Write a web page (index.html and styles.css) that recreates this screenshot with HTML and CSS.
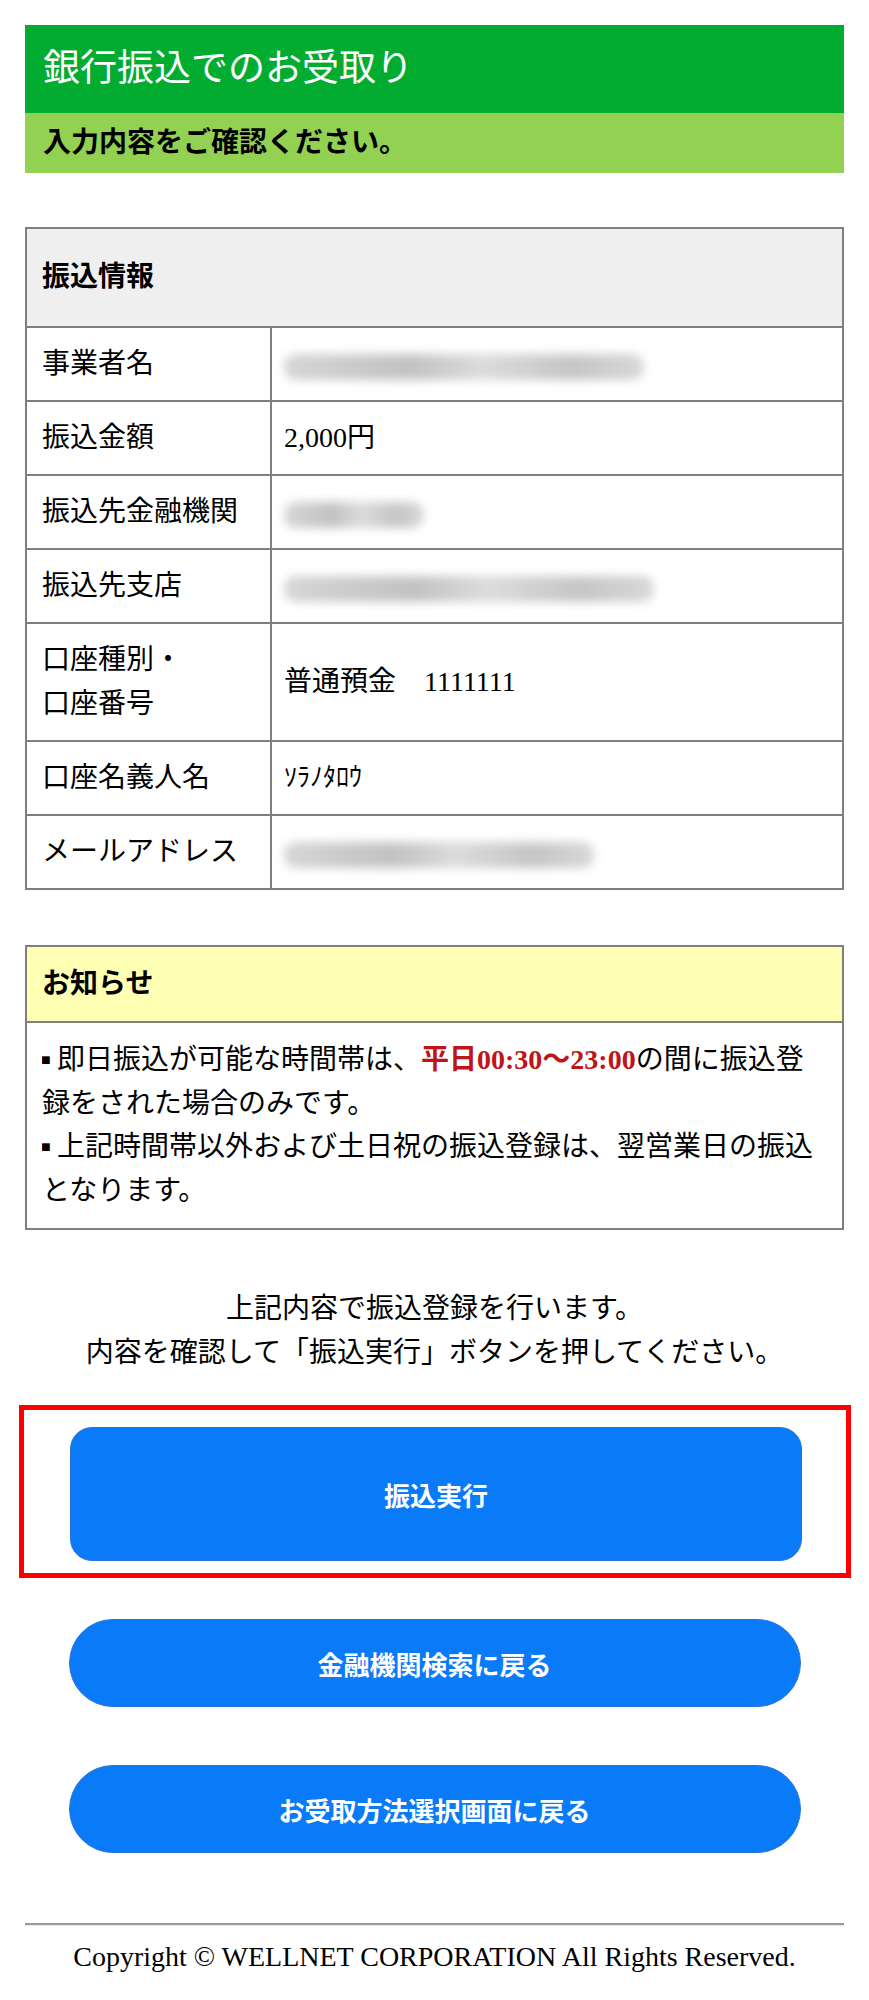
FILE: index.html
```html
<!DOCTYPE html>
<html lang="ja">
<head>
<meta charset="utf-8">
<title>銀行振込でのお受取り</title>
<link rel="stylesheet" href="styles.css">
</head>
<body>
<div class="page">
  <header class="head">
    <h1 class="head-title">銀行振込でのお受取り</h1>
    <p class="head-sub">入力内容をご確認ください。</p>
  </header>

  <table class="info">
    <colgroup><col class="col-label"><col></colgroup>
    <thead>
      <tr><th colspan="2" class="info-head">振込情報</th></tr>
    </thead>
    <tbody>
      <tr><td class="lbl">事業者名</td><td class="val"><span class="blur w1"></span></td></tr>
      <tr><td class="lbl">振込金額</td><td class="val">2,000円</td></tr>
      <tr><td class="lbl">振込先金融機関</td><td class="val"><span class="blur w2"></span></td></tr>
      <tr><td class="lbl">振込先支店</td><td class="val"><span class="blur w3"></span></td></tr>
      <tr><td class="lbl">口座種別・<br>口座番号</td><td class="val">普通預金　1111111</td></tr>
      <tr><td class="lbl">口座名義人名</td><td class="val kana">ｿﾗﾉﾀﾛｳ</td></tr>
      <tr><td class="lbl">メールアドレス</td><td class="val"><span class="blur w4"></span></td></tr>
    </tbody>
  </table>

  <section class="notice">
    <h2 class="notice-head">お知らせ</h2>
    <p class="notice-body"><span class="sq">■</span>即日振込が可能な時間帯は、<strong class="red">平日00:30〜23:00</strong>の間に振込登録をされた場合のみです。<br><span class="sq">■</span>上記時間帯以外および土日祝の振込登録は、翌営業日の振込となります。</p>
  </section>

  <p class="guide">上記内容で振込登録を行います。<br>内容を確認して「振込実行」ボタンを押してください。</p>

  <div class="highlight">
    <button class="btn btn-main" type="button">振込実行</button>
  </div>

  <button class="btn btn-pill btn-first" type="button">金融機関検索に戻る</button>
  <button class="btn btn-pill btn-second" type="button">お受取方法選択画面に戻る</button>

  <footer class="foot">
    <hr class="foot-line">
    <p class="copy">Copyright © WELLNET CORPORATION All Rights Reserved.</p>
  </footer>
</div>
</body>
</html>
```

FILE: styles.css
```css
html, body {
  margin: 0;
  padding: 0;
  background: #ffffff;
}

body {
  font-family: "Liberation Serif", "Noto Sans CJK JP", serif;
  color: #000;
}

.page {
  width: 819px;
  padding: 25px 25px 0;
}

/* Header */
.head {
  margin: 0;
}

.head-title {
  margin: 0;
  height: 88px;
  background: #02ac31;
  color: #ffffff;
  font-size: 37px;
  font-weight: normal;
  line-height: 88px;
  padding: 0 0 0 18px;
}

.head-sub {
  margin: 0;
  height: 60px;
  background: #93d152;
  font-size: 28px;
  font-weight: bold;
  line-height: 60px;
  padding-left: 18px;
}

/* Info table */
.info {
  margin-top: 54px;
  width: 100%;
  border-collapse: collapse;
  table-layout: fixed;
  font-size: 28px;
  line-height: 44px;
}

.col-label {
  width: 245px;
}

.info th,
.info td {
  border: 2px solid #7f7f7f;
  text-align: left;
  vertical-align: middle;
}

.info-head {
  background: #efefef;
  font-weight: bold;
  padding: 26px 15px 27px;
}

.lbl {
  padding: 14px 15px;
}

.val {
  padding: 14px 12px;
}

.kana {
  font-size: 26px;
}

.blur {
  display: inline-block;
  height: 26px;
  vertical-align: middle;
  border-radius: 12px;
  background: linear-gradient(90deg, #d6d6d6, #c2c2c2 35%, #dcdcdc 55%, #c6c6c6 80%, #d8d8d8);
  filter: blur(5px);
}

.w1 { width: 360px; }
.w2 { width: 140px; }
.w3 { width: 370px; }
.w4 { width: 310px; }

/* Notice */
.notice {
  margin-top: 55px;
  border: 2px solid #7f7f7f;
}

.notice-head {
  margin: 0;
  background: #ffffb3;
  border-bottom: 2px solid #7f7f7f;
  font-size: 28px;
  line-height: 44px;
  padding: 15px 15px 15px;
}

.notice-body {
  margin: 0;
  padding: 15px 22px 16px 15px;
  font-size: 28px;
  line-height: 43.5px;
}

.sq {
  display: inline-block;
  width: 15px;
  font-size: 16px;
  line-height: 1;
  overflow: hidden;
  vertical-align: 1px;
  text-indent: -1px;
}

.red {
  color: #bf1418;
}

/* Guide text */
.guide {
  margin: 57px 0 0;
  text-align: center;
  font-size: 28px;
  line-height: 44px;
}

/* Buttons */
.highlight {
  margin: 30px -7px 0 -6px;
  border: 5px solid #ff0000;
  padding: 17px 0 12px;
  display: flex;
  justify-content: center;
}

.btn {
  display: block;
  width: 732px;
  border: 1px solid #2c74d6;
  background: #0a7bf8;
  color: #ffffff;
  font-family: "Noto Sans CJK JP", sans-serif;
  font-size: 26px;
  font-weight: bold;
  padding: 0;
  cursor: pointer;
}

.btn-main {
  height: 134px;
  border-radius: 22px;
  margin-left: 2px;
}

.btn-pill {
  height: 88px;
  border-radius: 44px;
  margin-left: auto;
  margin-right: auto;
}

.btn-first {
  margin-top: 41px;
}

.btn-second {
  margin-top: 58px;
}

/* Footer */
.foot {
  margin-top: 70px;
}

.foot-line {
  margin: 0;
  height: 0;
  border: 0;
  border-top: 2px solid #9a9a9a;
  border-bottom: 1px solid #e4e4e4;
}

.copy {
  margin: 16px 0 0;
  text-align: center;
  font-size: 28px;
  line-height: 30px;
}
```
